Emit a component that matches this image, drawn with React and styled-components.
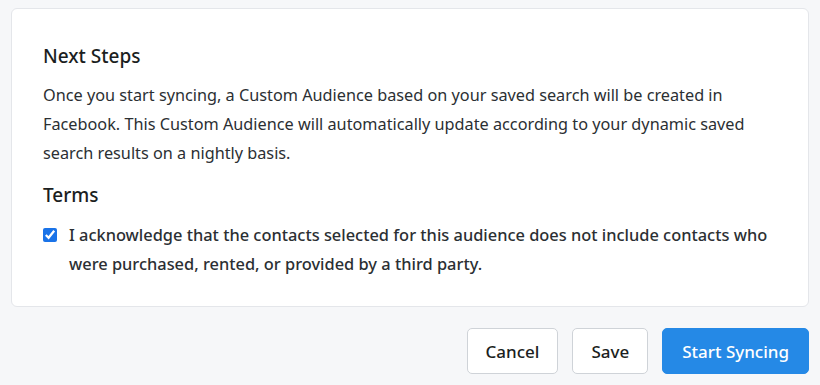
import React from 'react';
import styled, { createGlobalStyle } from 'styled-components';

const GlobalStyle = createGlobalStyle`
  html, body {
    margin: 0;
    padding: 0;
    background: #f6f7f9;
  }
  body {
    font-family: "Noto Sans", "Open Sans", sans-serif;
    color: #212529;
  }
`;

const Page = styled.div`
  width: 820px;
  height: 385px;
  box-sizing: border-box;
  padding: 8px 11px 0 11px;
  display: flex;
  flex-direction: column;
`;

const Card = styled.div`
  background: #fff;
  border: 1px solid #e4e6ea;
  border-radius: 6px;
  padding: 34px 31px 26px 31px;
  box-sizing: border-box;
  height: 299px;
`;

const Heading = styled.h2`
  margin: 0 0 12px 0;
  font-size: 19px;
  font-weight: 500;
  line-height: 26px;
  color: #1b1e21;
`;

const Text = styled.p`
  margin: 0 0 14px 0;
  font-size: 16.25px;
  line-height: 29px;
  color: #2b2f33;
`;

const CheckRow = styled.label`
  display: flex;
  align-items: flex-start;
  gap: 12px;
  font-size: 16.4px;
  font-weight: 500;
  line-height: 29px;
  color: #2b2f33;
`;

const Box = styled.input`
  margin: 8px 0 0 0;
  width: 14px;
  height: 14px;
  accent-color: #1a73e8;
  flex-shrink: 0;
`;

const Actions = styled.div`
  display: flex;
  justify-content: flex-end;
  gap: 14px;
  margin-top: 21px;
`;

const Button = styled.button`
  font-family: inherit;
  font-size: 17px;
  font-weight: 500;
  height: 46px;
  padding: 0 ${(p) => (p.$primary ? '19px' : '18px')};
  border-radius: 5px;
  border: 1px solid ${(p) => (p.$primary ? '#2589e6' : '#cfd3d8')};
  background: ${(p) => (p.$primary ? '#2589e6' : '#fff')};
  color: ${(p) => (p.$primary ? '#fff' : '#1b1e21')};
  cursor: pointer;
`;

export default function App() {
  return (
    <>
      <GlobalStyle />
      <Page>
        <Card>
          <Heading>Next Steps</Heading>
          <Text>
            Once you start syncing, a Custom Audience based on your saved search will be created in
            Facebook. This Custom Audience will automatically update according to your dynamic saved
            search results on a nightly basis.
          </Text>
          <Heading>Terms</Heading>
          <CheckRow>
            <Box type="checkbox" defaultChecked />
            <span>
              I acknowledge that the contacts selected for this audience does not include contacts who
              were purchased, rented, or provided by a third party.
            </span>
          </CheckRow>
        </Card>
        <Actions>
          <Button>Cancel</Button>
          <Button>Save</Button>
          <Button $primary>Start Syncing</Button>
        </Actions>
      </Page>
    </>
  );
}
